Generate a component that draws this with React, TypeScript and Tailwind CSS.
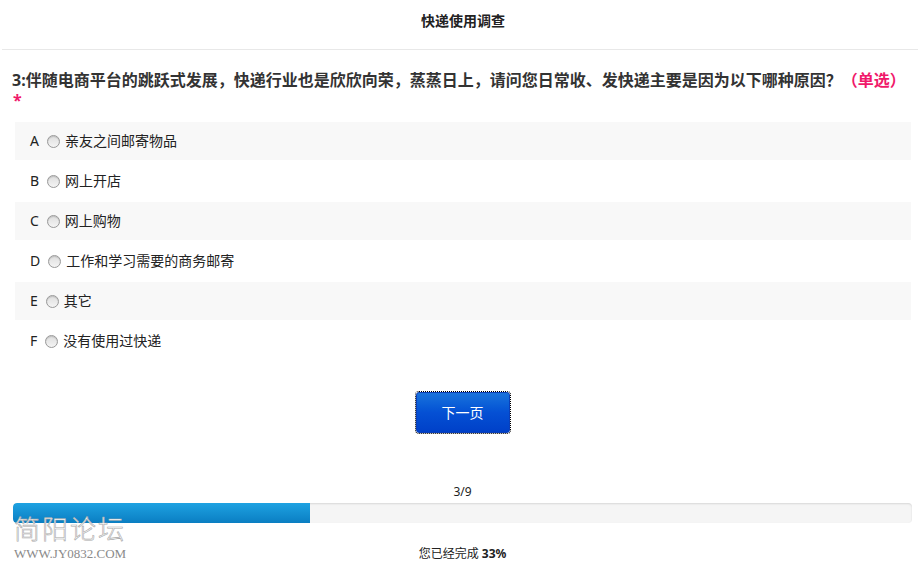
import React from "react";

const options = [
  { key: "A", label: "亲友之间邮寄物品" },
  { key: "B", label: "网上开店" },
  { key: "C", label: "网上购物" },
  { key: "D", label: "工作和学习需要的商务邮寄" },
  { key: "E", label: "其它" },
  { key: "F", label: "没有使用过快递" },
];

const font = "font-['Noto_Sans','Noto_Sans_CJK_SC',sans-serif]";

function Radio() {
  return (
    <span className="inline-block h-[13px] w-[13px] shrink-0 rounded-full border border-[#999] bg-gradient-to-b from-[#dedede] to-[#f4f4f4] shadow-[inset_0_1px_1px_rgba(0,0,0,0.15)]" />
  );
}

export default function App() {
  const done = 3;
  const total = 9;
  const pct = Math.round((done / total) * 100);

  return (
    <div className={`relative min-h-[574px] w-[920px] bg-white text-[#333] ${font}`}>
      {/* Title */}
      <header className="mx-[2px] flex h-[50px] items-center justify-center border-b border-[#e8e8e8] pb-[8px] pl-[6px]">
        <h1 className="text-[14px] font-bold leading-none text-[#222]">快递使用调查</h1>
      </header>

      {/* Question */}
      <div className="pl-[12px] pr-[10px] pt-[19px] text-[16px] font-bold text-[#333]">
        <p className="leading-[22px]">
          3:伴随电商平台的跳跃式发展，快递行业也是欣欣向荣，蒸蒸日上，请问您日常收、发快递主要是因为以下哪种原因？
          <span className="text-[#f0196a]">（单选）</span>
        </p>
        <p className="pl-[1px] text-[16px] leading-[18px] text-[#f0196a]">*</p>
      </div>

      {/* Options */}
      <ul className="ml-[15px] mr-[9px] mt-[13px] flex flex-col gap-[2px]">
        {options.map((o, i) => (
          <li
            key={o.key}
            className={`flex h-[38px] items-center pl-[15px] text-[14px] ${i % 2 === 0 ? "bg-[#f8f8f8]" : "bg-white"}`}
          >
            <span className="mr-[8px] leading-none text-[#222]">{o.key}</span>
            <Radio />
            <span className="ml-[5px] leading-none text-[#222]">{o.label}</span>
          </li>
        ))}
      </ul>

      {/* Next */}
      <div className="ml-[13px] mr-[8px] mt-[32px] flex justify-center">
        <button
          type="button"
          className="h-[41px] w-[94px] rounded-[3px] border border-[#0a3fb8] bg-gradient-to-b from-[#1a73dc] via-[#0550d4] to-[#0040c8] text-[14px] text-white outline-1 outline-offset-0 outline-dotted outline-black"
        >
          下一页
        </button>
      </div>

      {/* Progress */}
      <div className="ml-[13px] mr-[8px] mt-[51px]">
        <p className="text-center text-[12px] leading-[16px] text-[#222]">
          {done}/{total}
        </p>
        <div className="mt-[3px] h-[20px] overflow-hidden rounded-[4px] bg-[#f5f5f5] shadow-[inset_0_1px_2px_rgba(0,0,0,0.12)]">
          <div
            className="h-full rounded-l-[4px] bg-gradient-to-b from-[#1ea2e2] to-[#0a7ec2]"
            style={{ width: `${pct}%` }}
          />
        </div>
        <p className="mt-[23px] text-center text-[12px] leading-[16px] text-[#222]">
          您已经完成 <b className="font-bold">{pct}%</b>
        </p>
      </div>

      {/* Watermark */}
      <div className="pointer-events-none absolute left-[14px] top-[516px] select-none">
        <p className="font-['Liberation_Serif','Noto_Sans_CJK_SC',serif] text-[26px] font-light leading-[30px] tracking-[2px] text-white [-webkit-text-stroke:0.6px_#a8a8a8]">
          简阳论坛
        </p>
        <p className="font-['Liberation_Serif',serif] text-[13px] leading-[16px] text-[#8a8a8a]">WWW.JY0832.COM</p>
      </div>
    </div>
  );
}
